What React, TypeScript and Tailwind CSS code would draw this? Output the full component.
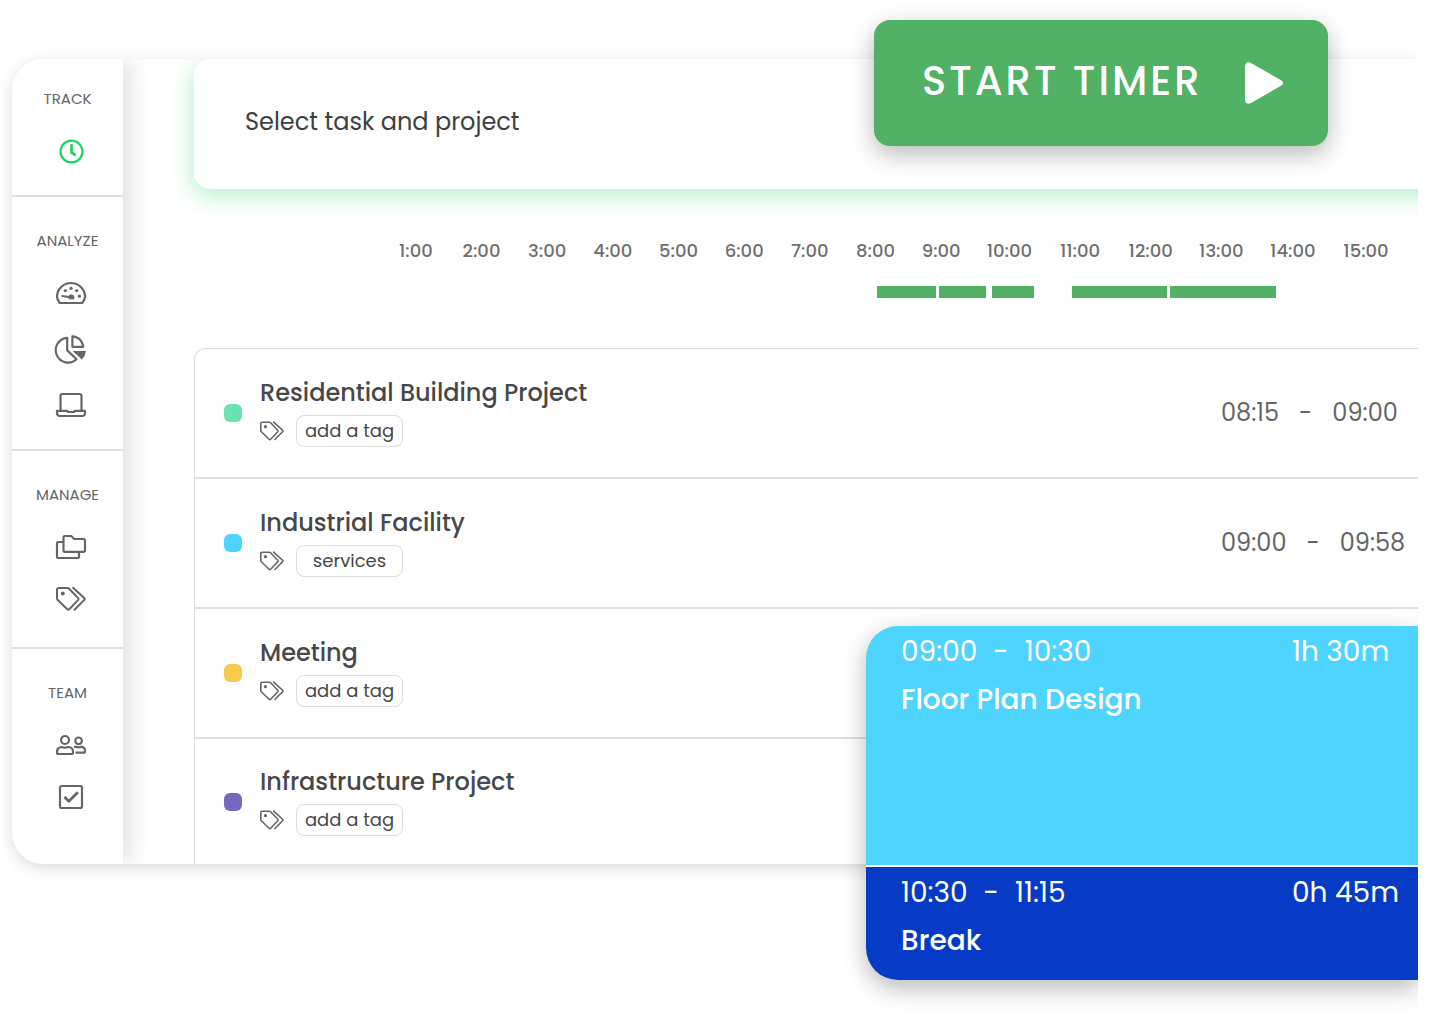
import type { ReactNode } from "react";
import { FaRegClock } from "react-icons/fa";
import clsx from "clsx";

function Icon(props: { w: number; h: number; children: ReactNode }) {
  const { w, h, children } = props;
  return (
    <svg
      width={w}
      height={h}
      viewBox={`0 0 ${w} ${h}`}
      fill="none"
      stroke="currentColor"
      strokeWidth={2.2}
      strokeLinejoin="round"
      aria-hidden="true"
      className="overflow-visible"
    >
      {children}
    </svg>
  );
}

function GaugeIcon() {
  return (
    <Icon w={30} h={22}>
      <path d="M3.8 21C2 18.6 1 17 1 14.8C1 7 7.4 1 15 1S29 7 29 14.8C29 17 28 18.6 26.2 21Z" />
      <g fill="currentColor" stroke="none">
        <circle cx="9.3" cy="8.6" r="1.6" />
        <circle cx="15" cy="6.3" r="1.6" />
        <circle cx="20.7" cy="8.6" r="1.6" />
        <circle cx="23.4" cy="14.2" r="1.6" />
        <path d="M6.4 13L12.6 14C13.2 13 14.2 12.6 15.4 12.6C17.2 12.6 18.4 13.9 18.4 15.4C18.4 16.1 18.2 16.7 17.9 17.2H13C12.6 16.8 12.4 16.4 12.3 15.9L6.1 14.9C5 14.6 5.2 12.8 6.4 13Z" />
      </g>
    </Icon>
  );
}

function PieIcon() {
  return (
    <Icon w={30} h={28}>
      <path d="M11.2 2.8A12.4 12.4 0 1 0 20.6 24.2L11.2 15.4Z" />
      <path d="M16.4 1.4A11 11 0 0 1 27.2 11.8H16.4Z" />
      <path d="M16.6 16H30A14 14 0 0 1 25.8 24.4Z" fill="currentColor" stroke="none" />
    </Icon>
  );
}

function LaptopIcon() {
  return (
    <Icon w={30} h={24}>
      <path d="M4.5 17.5V2.8A1.8 1.8 0 0 1 6.3 1H23.7A1.8 1.8 0 0 1 25.5 2.8V17.5" />
      <path d="M1 17.8H11L12 19H18L19 17.8H29V20A3 3 0 0 1 26 23H4A3 3 0 0 1 1 20Z" />
    </Icon>
  );
}

function FoldersIcon() {
  return (
    <Icon w={30} h={24}>
      <path d="M8.9 1H15.2L18.2 4H27.6A1.4 1.4 0 0 1 29 5.4V15.4A1.4 1.4 0 0 1 27.6 16.8H8.9A1.4 1.4 0 0 1 7.5 15.4V2.4A1.4 1.4 0 0 1 8.9 1Z" />
      <path d="M7 7H2.4A1.4 1.4 0 0 0 1 8.4V21.6A1.4 1.4 0 0 0 2.4 23H21.6A1.4 1.4 0 0 0 23 21.6V17" />
    </Icon>
  );
}

function TagsIcon(props: { className?: string }) {
  return (
    <svg
      viewBox="0 0 30 24"
      className={props.className}
      fill="none"
      stroke="currentColor"
      strokeWidth={2}
      strokeLinejoin="round"
      aria-hidden="true"
    >
      <path d="M2.6 1H11.6Q12.5 1 13.2 1.7L22.2 11.1Q23 12 22.2 12.9L13.3 22.3Q12.3 23.3 11.3 22.3L1.7 13Q1 12.3 1 11.4V2.6A1.6 1.6 0 0 1 2.6 1Z" />
      <path d="M16.2 .8H17L28.3 11.1Q29.2 12 28.3 12.9L18 23.2" />
      <circle cx="6.8" cy="6.6" r="2" fill="currentColor" stroke="none" />
    </svg>
  );
}

function UsersIcon() {
  return (
    <Icon w={30} h={20}>
      <circle cx="9" cy="5" r="4" />
      <path d="M1 17.5V16.6A4.6 4.6 0 0 1 5.6 12Q9 13.2 12.4 12A4.6 4.6 0 0 1 17 16.6V17.5A1.5 1.5 0 0 1 15.5 19H2.5A1.5 1.5 0 0 1 1 17.5Z" />
      <circle cx="22.6" cy="5.8" r="3.3" />
      <path d="M18 11.8H19.8Q22.6 12.8 25.4 11.8A3.6 3.6 0 0 1 29 15.4V16.2A1.5 1.5 0 0 1 27.5 17.7H19.4" />
    </Icon>
  );
}

function CheckIcon() {
  return (
    <Icon w={24} h={24}>
      <rect x="1" y="1" width="22" height="22" rx="1.8" />
      <path d="M5.4 12L9.8 16.2L18.8 7.2" strokeWidth={2.8} />
    </Icon>
  );
}

const menu = [
  {
    title: "TRACK",
    className: "pt-[30px] pb-7 border-b-2",
    items: [{ label: "Timer", icon: <FaRegClock size={25} color="#26cf62" /> }],
  },
  {
    title: "ANALYZE",
    className: "pt-[34px] pb-7 border-b-2",
    wide: true,
    items: [
      { label: "Dashboard", icon: <GaugeIcon /> },
      { label: "Reports", icon: <PieIcon /> },
      { label: "Computer activities", icon: <LaptopIcon /> },
    ],
  },
  {
    title: "MANAGE",
    className: "pt-[34px] pb-8 border-b-2",
    items: [
      { label: "Projects", icon: <FoldersIcon /> },
      { label: "Tags", icon: <TagsIcon className="w-[30px] h-6" /> },
    ],
  },
  {
    title: "TEAM",
    className: "pt-[34px]",
    items: [
      { label: "People", icon: <UsersIcon /> },
      { label: "Approvals", icon: <CheckIcon /> },
    ],
  },
];

const hours = Array.from({ length: 15 }, (_, i) => `${i + 1}:00`);

// the ruler is 1020 units wide, gap is the space before each bar
const RULER = 1020;
const bars = [
  { gap: 494, width: 59 },
  { gap: 3, width: 47 },
  { gap: 6, width: 42 },
  { gap: 38, width: 95 },
  { gap: 3, width: 106 },
];

const entries = [
  { name: "Residential Building Project", tag: "add a tag", dot: "bg-[#69e3b1]", from: "08:15", to: "09:00" },
  { name: "Industrial Facility", tag: "services", dot: "bg-[#4fd3ff]", from: "09:00", to: "09:58" },
  { name: "Meeting", tag: "add a tag", dot: "bg-[#f6cb4f]" },
  { name: "Infrastructure Project", tag: "add a tag", dot: "bg-[#7768be]" },
];

function Sidebar() {
  return (
    <nav className="relative z-10 w-[111px] shrink-0 bg-white text-[#666] shadow-[6px_0_24px_rgba(0,0,0,0.13)]">
      {menu.map((group) => (
        <section key={group.title} className={clsx("border-[#dedede]", group.className)}>
          <h2 className="mb-[26px] text-center text-[15px] leading-5">{group.title}</h2>
          <div className={clsx("flex flex-col items-center pl-[7px]", group.wide ? "gap-6" : "gap-5")}>
            {group.items.map((item) => (
              <button
                key={item.label}
                aria-label={item.label}
                className="flex h-8 w-8 cursor-pointer items-center justify-center"
              >
                {item.icon}
              </button>
            ))}
          </div>
        </section>
      ))}
    </nav>
  );
}

function Timeline() {
  return (
    <div className="mt-[50px] mb-[50px] ml-[189px] mr-[15px]">
      <div className="grid grid-cols-[repeat(9,197fr)_repeat(4,212fr)_217fr_222fr] text-center text-lg leading-6 font-medium text-[#6f6f6f]">
        {hours.map((hour) => (
          <span key={hour}>{hour}</span>
        ))}
      </div>
      <div className="mt-[23px] flex h-3">
        {bars.map((bar, i) => (
          <div
            key={i}
            className="bg-[#51b165]"
            style={{
              marginLeft: `${(bar.gap / RULER) * 100}%`,
              width: `${(bar.width / RULER) * 100}%`,
            }}
          />
        ))}
      </div>
    </div>
  );
}

function Entries() {
  return (
    <ul className="rounded-tl-xl border-t border-l border-[#dcdcdc]">
      {entries.map((entry) => (
        <li
          key={entry.name}
          className="flex h-[130px] items-center border-b-2 border-[#dedede] pl-[29px] last:h-[125px] last:border-b-0"
        >
          <span className={clsx("mr-[18px] h-[18px] w-[18px] shrink-0 rounded-md", entry.dot)} />
          <div className="flex-1 pb-1">
            <h3 className="text-2xl leading-9 font-medium text-[#484848]">{entry.name}</h3>
            <div className="mt-1 flex items-center gap-3">
              <TagsIcon className="h-5 w-6 text-[#666]" />
              <button className="h-8 w-[107px] cursor-pointer rounded-lg border border-[#dcdcdc] text-lg leading-none text-[#484848]">
                {entry.tag}
              </button>
            </div>
          </div>
          {entry.from && (
            <div className="flex w-[197px] shrink-0 gap-5 text-2xl text-[#666]">
              <span>{entry.from}</span>
              <span>-</span>
              <span>{entry.to}</span>
            </div>
          )}
        </li>
      ))}
    </ul>
  );
}

function Slot(props: { from: string; to: string; total: string; name: string; className: string }) {
  const { from, to, total, name, className } = props;
  return (
    <div className={clsx("pt-2 pl-[35px]", className)}>
      <div className="flex justify-between text-[28px] leading-9">
        <div className="flex gap-4">
          <span>{from}</span>
          <span>-</span>
          <span>{to}</span>
        </div>
        <span className="w-[126px]">{total}</span>
      </div>
      <h3 className="mt-3 text-[28px] leading-9 font-medium">{name}</h3>
    </div>
  );
}

export default function App() {
  return (
    <div className="min-h-screen bg-white pr-7 font-['Poppins','Inter',sans-serif]">
      <div className="relative min-h-screen overflow-hidden pt-[59px] pl-3">
        <div className="rounded-l-[32px] shadow-[0_4px_16px_rgba(0,0,0,0.14)]">
          <div className="flex overflow-hidden rounded-l-[32px] bg-white">
            <Sidebar />
            <main className="min-w-0 flex-1 pl-[71px]">
              <div className="-mr-10 flex h-[130px] items-center rounded-2xl pb-1 pl-[51px] shadow-[0_6px_24px_rgba(38,207,98,0.36)]">
                <button className="cursor-pointer text-2xl text-[#404040]">Select task and project</button>
              </div>
              <Timeline />
              <Entries />
            </main>
          </div>
        </div>

        <button className="absolute top-5 right-[90px] z-20 flex h-[126px] w-[454px] cursor-pointer items-center justify-between rounded-2xl bg-[#51b165] pr-[45px] pl-12 text-white shadow-[0_8px_24px_rgba(0,0,0,0.28)]">
          <span className="pb-1 text-[40px] leading-none font-medium tracking-[3px]">START TIMER</span>
          <svg width="38" height="42" viewBox="0 0 38 42" fill="currentColor" aria-hidden="true">
            <path d="M0 4.6C0 1 3 -.8 6 1L36 18.2C38.7 19.8 38.7 22.2 36 23.8L6 41C3 42.8 0 41 0 37.4Z" />
          </svg>
        </button>

        <div className="absolute top-[626px] right-0 z-20 w-[552px] overflow-hidden rounded-l-[32px] text-white shadow-[0_8px_24px_rgba(0,0,0,0.28)]">
          <Slot
            from="09:00"
            to="10:30"
            total="1h 30m"
            name="Floor Plan Design"
            className="h-[241px] border-b-2 border-white bg-[#4fd3ff]"
          />
          <Slot from="10:30" to="11:15" total="0h 45m" name="Break" className="h-[113px] bg-[#053bc5]" />
        </div>
      </div>
    </div>
  );
}
